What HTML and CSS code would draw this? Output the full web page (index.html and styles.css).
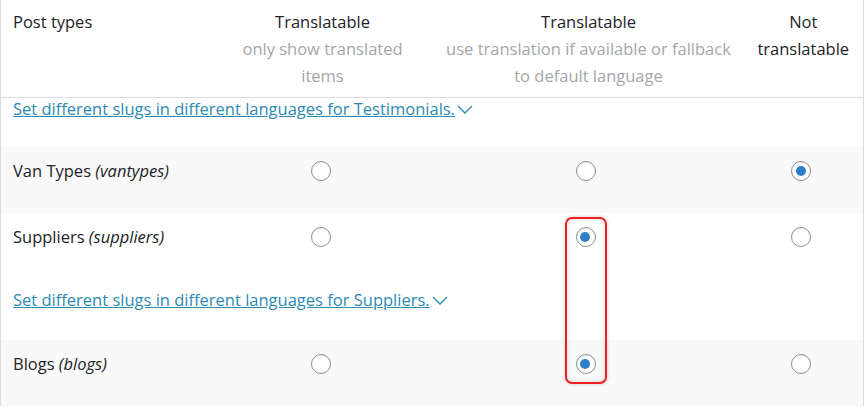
FILE: index.html
```html
<!DOCTYPE html>
<html>
<head>
    <meta charset="UTF-8" />
    <title>Post types translation settings</title>
    <link rel="stylesheet" href="styles.css">
</head>
<body>
    <div class="panel">
        <table class="post-types">
            <colgroup>
                <col class="col-name">
                <col class="col-only">
                <col class="col-fallback">
                <col class="col-not">
            </colgroup>
            <thead>
                <tr>
                    <th class="name">Post types</th>
                    <th>Translatable<span class="desc">only show translated items</span></th>
                    <th class="fallback">Translatable<span class="desc">use translation if available or fallback to default language</span></th>
                    <th class="not">Not translatable</th>
                </tr>
            </thead>
            <tbody>
                <tr class="slug-row first">
                    <td colspan="4">
                        <a href="#">Set different slugs in different languages for Testimonials.</a><svg class="chevron" width="16" height="9" viewBox="0 0 16 9"><path d="M1 1l7 7 7-7" fill="none" stroke="currentColor" stroke-width="1.3"/></svg>
                    </td>
                </tr>
                <tr class="alt">
                    <td class="name">Van Types <em>(vantypes)</em></td>
                    <td><input type="radio" name="vantypes"></td>
                    <td><input type="radio" name="vantypes"></td>
                    <td><input type="radio" name="vantypes" checked></td>
                </tr>
                <tr>
                    <td class="name">Suppliers <em>(suppliers)</em></td>
                    <td><input type="radio" name="suppliers"></td>
                    <td><input type="radio" name="suppliers" checked></td>
                    <td><input type="radio" name="suppliers"></td>
                </tr>
                <tr class="slug-row">
                    <td colspan="4">
                        <a href="#">Set different slugs in different languages for Suppliers.</a><svg class="chevron" width="16" height="9" viewBox="0 0 16 9"><path d="M1 1l7 7 7-7" fill="none" stroke="currentColor" stroke-width="1.3"/></svg>
                    </td>
                </tr>
                <tr class="alt">
                    <td class="name">Blogs <em>(blogs)</em></td>
                    <td><input type="radio" name="blogs"></td>
                    <td><input type="radio" name="blogs" checked></td>
                    <td><input type="radio" name="blogs"></td>
                </tr>
            </tbody>
        </table>
        <div class="highlight"></div>
    </div>
</body>
</html>
```

FILE: styles.css
```css
body {
    margin: 0;
    background: #fff;
    font-family: "Open Sans", "Noto Sans", sans-serif;
    font-size: 16.5px;
    color: #1d2327;
}
.panel {
    position: relative;
    width: 864px;
    height: 413px;
    overflow: hidden;
}
table {
    width: 863px;
    table-layout: fixed;
    border-collapse: collapse;
    border-left: 1px solid #dcdcde;
    border-right: 1px solid #dcdcde;
}
.col-name { width: 213px; }
.col-only { width: 218px; }
.col-fallback { width: 312px; }
.col-not { width: 120px; }
th {
    font-weight: normal;
    text-align: center;
    vertical-align: top;
    line-height: 27px;
    padding: 8px 12px 8px;
    border-bottom: 1px solid #dcdcde;
}
th.name {
    text-align: left;
}
th.fallback {
    padding: 8px 8px 8px 10px;
}
th.not {
    padding: 8px 10px 8px;
}
.desc {
    display: block;
    color: #a4a7aa;
}
td {
    text-align: center;
    vertical-align: top;
    line-height: 27px;
    padding: 10px 12px 30px;
}
td.name {
    text-align: left;
}
tr.alt td {
    background: #f9f9f9;
    padding-bottom: 29px;
}
.slug-row td {
    text-align: left;
    line-height: 22px;
    padding: 9px 12px 29px;
}
.slug-row.first td {
    padding: 0 12px 27px;
}
.slug-row a {
    color: #2c8ab3;
}
.chevron {
    color: #2c8ab3;
    margin-left: 2px;
    vertical-align: 1px;
}
input[type="radio"] {
    appearance: none;
    width: 20px;
    height: 20px;
    margin: 4px 4px 0 0;
    border: 1.5px solid #8c8f94;
    border-radius: 50%;
    background: #fff;
    box-shadow: inset 0 1px 2px rgba(0, 0, 0, 0.08);
    display: inline-block;
    vertical-align: top;
    position: relative;
}
input[type="radio"]:checked::before {
    content: "";
    position: absolute;
    left: 3.5px;
    top: 3.5px;
    width: 10px;
    height: 10px;
    border-radius: 50%;
    background: #2f7fc6;
}
.highlight {
    position: absolute;
    left: 565px;
    top: 217px;
    width: 38px;
    height: 163px;
    border: 2px solid #f01e1e;
    border-radius: 7px;
    box-shadow: inset 0 0 6px rgba(0, 0, 0, 0.12), 0 0 4px rgba(0, 0, 0, 0.18);
}
```
